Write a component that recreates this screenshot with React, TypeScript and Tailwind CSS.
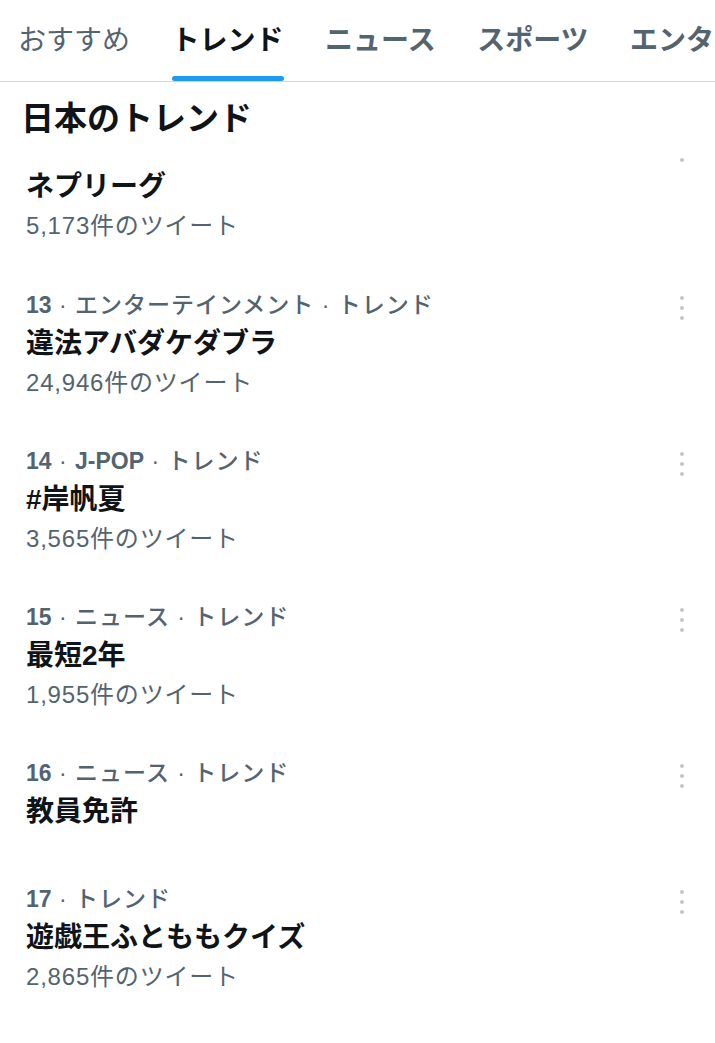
const FONT = "font-['Liberation_Sans','Noto_Sans_CJK_JP',sans-serif]";

const tabs = [
  { label: "おすすめ", cls: "font-normal text-[#536471]" },
  { label: "トレンド", cls: "font-bold text-[#0f1419]", active: true },
  { label: "ニュース", cls: "font-bold text-[#536471]" },
  { label: "スポーツ", cls: "font-bold text-[#536471]" },
  { label: "エンターテインメント", cls: "font-bold text-[#536471]" },
];

type Seg = { t: string; b?: boolean };

interface Trend {
  meta: Seg[];
  title: string;
  count?: string;
}

const trends: Trend[] = [
  {
    meta: [{ t: "13", b: true }, { t: " · エンターテインメント · トレンド" }],
    title: "違法アバダケダブラ",
    count: "24,946件のツイート",
  },
  {
    meta: [{ t: "14", b: true }, { t: " · " }, { t: "J-POP", b: true }, { t: " · トレンド" }],
    title: "#岸帆夏",
    count: "3,565件のツイート",
  },
  {
    meta: [{ t: "15", b: true }, { t: " · ニュース · トレンド" }],
    title: "最短2年",
    count: "1,955件のツイート",
  },
  {
    meta: [{ t: "16", b: true }, { t: " · ニュース · トレンド" }],
    title: "教員免許",
  },
  {
    meta: [{ t: "17", b: true }, { t: " · トレンド" }],
    title: "遊戯王ふとももクイズ",
    count: "2,865件のツイート",
  },
];

function Dots() {
  return (
    <div className="flex flex-col gap-[6px]">
      <span className="w-[4px] h-[4px] rounded-full bg-[#c2c6c9]" />
      <span className="w-[4px] h-[4px] rounded-full bg-[#c2c6c9]" />
      <span className="w-[4px] h-[4px] rounded-full bg-[#c2c6c9]" />
    </div>
  );
}

function TrendItem({ trend }: { trend: Trend }) {
  return (
    <div className={"relative px-[26px] " + (trend.count ? "pb-[48px]" : "pb-[50px]")}>
      <div className="absolute right-[31px] top-[10px]">
        <Dots />
      </div>
      <div className="h-[38px] flex items-center text-[23px] text-[#536471] whitespace-pre">
        {trend.meta.map((s, i) => (
          <span key={i} className={s.b ? "font-bold" : "font-medium tracking-[1px]"}>
            {s.t}
          </span>
        ))}
      </div>
      <div className="h-[38px] flex items-center pt-[1px] text-[28px] font-bold text-[#0f1419]">
        {trend.title}
      </div>
      {trend.count && (
        <div className="pt-[10px] leading-[22px] text-[24px] tracking-[0.8px] text-[#536471]">{trend.count}</div>
      )}
    </div>
  );
}

export default function App() {
  return (
    <div className={"w-[715px] h-[1043px] overflow-hidden bg-white " + FONT}>
      {/* タブ */}
      <div className="flex gap-[41.5px] pl-[18px] border-b border-[#cfd9de] whitespace-nowrap overflow-hidden">
        {tabs.map((tab) => (
          <div key={tab.label} className="flex flex-col h-[81px] flex-shrink-0">
            <div className={"flex-1 flex items-center pt-[5px] text-[28px] " + tab.cls}>{tab.label}</div>
            <div className={"h-[5px] rounded-full " + (tab.active ? "bg-[#1d9bf0]" : "bg-transparent")} />
          </div>
        ))}
      </div>

      {/* 見出し */}
      <div className="px-[21px] pt-[18px] pb-[29px]">
        <h2 className="leading-[38px] text-[33px] font-bold text-[#0f1419]">日本のトレンド</h2>
      </div>

      {/* 1件目（上部が見出しに隠れている） */}
      <div className="relative px-[26px] pb-[49px]">
        <div className="absolute right-[31px] -top-[9px] w-[4px] h-[4px] rounded-full bg-[#c2c6c9]" />
        <div className="h-[38px] flex items-center pt-[1px] text-[28px] font-bold text-[#0f1419]">ネプリーグ</div>
        <div className="pt-[10px] leading-[22px] text-[24px] tracking-[0.8px] text-[#536471]">5,173件のツイート</div>
      </div>

      {trends.map((t) => (
        <TrendItem key={t.title} trend={t} />
      ))}
    </div>
  );
}
